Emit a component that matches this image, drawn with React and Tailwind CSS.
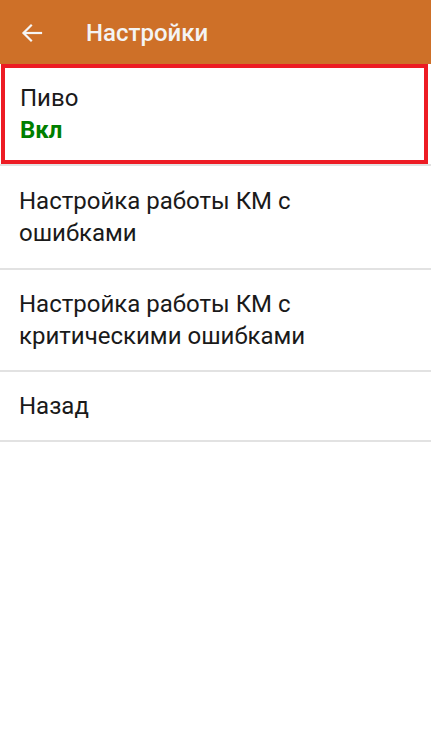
import React from 'react'

const items = [
  { title: ['Настройка работы КМ с', 'ошибками'], pad: 'py-[19px]' },
  { title: ['Настройка работы КМ с', 'критическими ошибками'], pad: 'py-[18px]' },
  { title: ['Назад'], pad: 'py-[18px]' },
]

export default function App() {
  return (
    <div className="w-[431px] h-[738px] bg-white" style={{ fontFamily: 'Roboto, "Noto Sans", sans-serif' }}>
      {/* toolbar */}
      <div className="h-[64px] bg-[#ce7028] flex items-center">
        <div className="w-[86px] flex items-center pl-[20px] pt-[1px]">
          <svg width="24" height="24" viewBox="0 0 24 24" fill="none" stroke="#f5f5f5" strokeWidth="2.2" strokeLinecap="square">
            <path d="M21 12H4" />
            <path d="M11 4.5L3.5 12L11 19.5" />
          </svg>
        </div>
        <div className="text-[24px] font-medium text-[#f4f4f4] pt-[1px]">Настройки</div>
      </div>

      {/* highlighted item */}
      <div className="ml-[1px] mr-[3px] border-4 border-[#ed1c24] h-[100px] pl-[15px] flex flex-col justify-center">
        <div className="text-[24px] leading-[32px] text-[#1a1a1a]">Пиво</div>
        <div className="text-[24px] leading-[32px] font-bold text-[#007f00]">Вкл</div>
      </div>
      <div className="h-[2px] bg-[#e2e2e2]" />

      {items.map((item, i) => (
        <div key={i}>
          <div className={`px-[19px] ${item.pad}`}>
            {item.title.map((line, j) => (
              <div key={j} className="text-[24px] leading-[32px] text-[#1a1a1a]">{line}</div>
            ))}
          </div>
          <div className="h-[2px] bg-[#e2e2e2]" />
        </div>
      ))}
    </div>
  )
}
